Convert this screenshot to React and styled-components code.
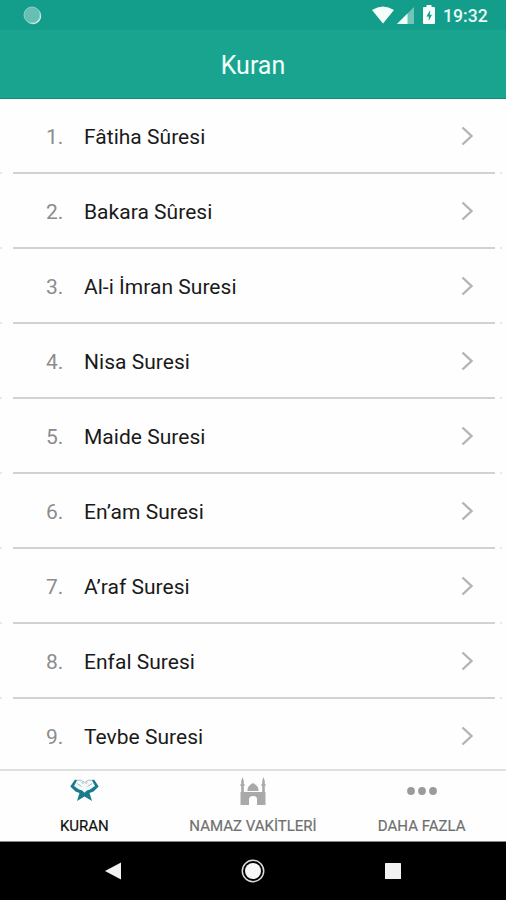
import styled, { createGlobalStyle } from 'styled-components';

const GlobalStyle = createGlobalStyle`
  * {
    box-sizing: border-box;
  }

  body {
    margin: 0;
    background: #ffffff;
    font-family: Roboto, 'Liberation Sans', sans-serif;
  }
`;

const Screen = styled.div`
  display: flex;
  flex-direction: column;
  width: 506px;
  height: 900px;
  overflow: hidden;
  background: #fefefe;
`;

const StatusBar = styled.div`
  display: flex;
  align-items: center;
  flex-shrink: 0;
  height: 30px;
  padding: 0 18px 0 23px;
  background: #139d8b;
`;

const StatusIcons = styled.div`
  display: flex;
  align-items: center;
  gap: 3px;
  margin-left: auto;
`;

const Clock = styled.span`
  width: 45px;
  margin-left: 4px;
  padding-top: 2px;
  font-size: 17.6px;
  font-weight: 500;
  line-height: 20px;
  white-space: nowrap;
  color: #e9f8f4;
`;

const Header = styled.header`
  display: flex;
  align-items: center;
  justify-content: center;
  flex-shrink: 0;
  height: 69px;
  padding-top: 4px;
  border-bottom: 1px solid #128a77;
  background: #18a48e;
`;

const Title = styled.h1`
  margin: 0;
  font-size: 25px;
  font-weight: 400;
  line-height: 30px;
  color: #f2fffb;
`;

const List = styled.ul`
  flex: 1;
  min-height: 0;
  margin: 0;
  padding: 0;
  overflow: hidden;
  list-style: none;
`;

const Row = styled.li`
  display: flex;
  flex-direction: column;
  height: 75px;
`;

const RowContent = styled.div`
  display: flex;
  align-items: center;
  flex: 1;
  padding: 1px 32px 0 46px;
`;

const Number = styled.span`
  width: 38px;
  padding-top: 1px;
  font-size: 21px;
  line-height: 26px;
  color: #8c8c8c;
`;

const Name = styled.span`
  flex: 1;
  padding-top: 1px;
  font-size: 21px;
  line-height: 26px;
  letter-spacing: 0.03px;
  color: #1a1a1a;
`;

const Divider = styled.div`
  display: flex;
  height: 2px;
  padding-right: 4px;
`;

const Line = styled.span`
  flex: 1;
  margin: 0 5px 0 11px;
  background: #d2d2d2;
`;

const Stub = styled.span`
  width: 2px;
  background: #e8e8e8;
`;

const TabBar = styled.nav`
  display: grid;
  grid-template-columns: repeat(3, 1fr);
  flex-shrink: 0;
  height: 73px;
  border-top: 2px solid #e0e0e0;
  border-bottom: 1px solid #858585;
`;

const Tab = styled.div`
  display: flex;
  flex-direction: column;
  align-items: center;
  padding-top: 5px;
  color: ${({ $active }) => ($active ? '#111111' : '#707070')};
`;

const TabLabel = styled.span`
  margin-top: 11px;
  font-size: 15px;
  line-height: 18px;
  white-space: nowrap;
  -webkit-text-stroke: 0.2px;
`;

const NavigationBar = styled.div`
  display: grid;
  grid-template-columns: repeat(3, 140px);
  justify-content: center;
  align-items: center;
  justify-items: center;
  flex-shrink: 0;
  height: 58px;
  background: #000000;
`;

const surahs = [
  'Fâtiha Sûresi',
  'Bakara Sûresi',
  'Al-i İmran Suresi',
  'Nisa Suresi',
  'Maide Suresi',
  'En’am Suresi',
  'A’raf Suresi',
  'Enfal Suresi',
  'Tevbe Suresi',
];

const Chevron = () => (
  <svg width="14" height="20" viewBox="0 0 14 20" fill="none">
    <path d="M2.5 1.5 11.5 10l-9 8.5" stroke="#b4b4b4" strokeWidth="2.4" />
  </svg>
);

const RecordingIcon = () => (
  <svg width="19" height="19" viewBox="0 0 19 19">
    <circle cx="10" cy="10" r="8.2" fill="#d5f3ec" />
    <circle cx="9" cy="9" r="8" fill="#67beb2" />
    <circle cx="9" cy="9" r="8" fill="none" stroke="#8bcfc5" strokeWidth="1" />
  </svg>
);

const WifiIcon = () => (
  <svg width="22" height="18" viewBox="0 0 22 18">
    <path d="M0 4Q11-3 22 4L11 17.5Z" fill="#f7fffd" />
  </svg>
);

const SignalIcon = () => (
  <svg width="18" height="17" viewBox="0 0 18 17">
    <path d="M17 0v17H0Z" fill="#71c4b8" />
    <path d="M10.5 6.5V17H0Z" fill="#f2fffb" />
  </svg>
);

const BatteryIcon = () => (
  <svg width="18" height="20" viewBox="-5 0 18 20">
    <path d="M3.5 0h5v2H11q1 0 1 1v15q0 1-1 1H1q-1 0-1-1V3q0-1 1-1h2.5Z" fill="#f7fffd" />
    <path d="M7.3 5 3.4 11.4h2.3V16L9 9.8H6.8Z" fill="#139d8b" />
  </svg>
);

// open book resting on a crossed stand
const QuranIcon = () => (
  <svg width="30" height="30" viewBox="0 0 30 30">
    <path
      d="M4.5 10 7 4.5Q12 3 15.5 6.5 19 3 24 4.500L26.500 10 21 15.500l-5.500 2.500-5.500-2.500Z"
      fill="#f6f9f9"
    />
    <path
      d="M7 4.300Q12 3 15.500 6.500 19 3 24 4.300M8 7.500l4.500 3M18.500 10.500l4.500-3M12.500 6l2 2M18.500 6l-2 2"
      fill="none"
      stroke="#9fc0c5"
      strokeWidth="1"
    />
    <path
      d="M6 3.500 1.300 10.500 6.500 15.500l4 1.500L8 25l7.500-4.500L23 25l-2.500-8 4-1.500 5.200-5L25 3.500l-2 1L26 10l-5 3.500q-3.500.5-5.500 3.200Q13.500 14 10 13.500L5 10l3-5.500Z"
      fill="#177b8c"
    />
  </svg>
);

const MosqueIcon = () => (
  <svg width="26" height="30" viewBox="0 0 26 30" fill="#a9a9a9">
    <path d="m2.500 1 1.300 4v3h.7v2h-.7v7H1.200v-7H.5V8h.7V5ZM23.500 1l1.300 4v3h.7v2h-.7v7h-2.600v-7h-.7V8h.7V5Z" />
    <path d="M7.500 15q-.5-5 5.500-8 6 3 5.500 8Z" />
    <path d="M.5 16h25v13H17v-5.500q0-3.500-4-3.500t-4 3.500V29H.5Z" />
  </svg>
);

const MoreIcon = () => (
  <svg width="30" height="30" viewBox="0 0 30 30" fill="#9b9b9b">
    <circle cx="4" cy="15" r="3.9" />
    <circle cx="15" cy="15" r="3.9" />
    <circle cx="26" cy="15" r="3.9" />
  </svg>
);

const BackIcon = () => (
  <svg width="18" height="20" viewBox="0 0 18 20">
    <path d="M1 10 17 1.5v17Z" fill="#f2f2f2" />
  </svg>
);

const HomeIcon = () => (
  <svg width="24" height="24" viewBox="0 0 24 24">
    <circle cx="12" cy="12" r="10.7" fill="none" stroke="#dddddd" strokeWidth="1.5" />
    <circle cx="12" cy="12" r="8" fill="#f7f7f7" />
  </svg>
);

const RecentsIcon = () => (
  <svg width="16" height="16" viewBox="0 0 16 16">
    <rect width="16" height="16" rx="0.5" fill="#f2f2f2" />
  </svg>
);

const App = () => {
  return (
    <>
      <GlobalStyle />
      <Screen>
        <StatusBar>
          <RecordingIcon />
          <StatusIcons>
            <WifiIcon />
            <SignalIcon />
            <BatteryIcon />
            <Clock>19:32</Clock>
          </StatusIcons>
        </StatusBar>

        <Header>
          <Title>Kuran</Title>
        </Header>

        <List>
          {surahs.map((name, index) => (
            <Row key={name}>
              <RowContent>
                <Number>{index + 1}.</Number>
                <Name>{name}</Name>
                <Chevron />
              </RowContent>
              <Divider>
                <Stub />
                <Line />
                <Stub />
              </Divider>
            </Row>
          ))}
        </List>

        <TabBar>
          <Tab $active>
            <QuranIcon />
            <TabLabel>KURAN</TabLabel>
          </Tab>
          <Tab>
            <MosqueIcon />
            <TabLabel>NAMAZ VAKİTLERİ</TabLabel>
          </Tab>
          <Tab>
            <MoreIcon />
            <TabLabel>DAHA FAZLA</TabLabel>
          </Tab>
        </TabBar>

        <NavigationBar>
          <BackIcon />
          <HomeIcon />
          <RecentsIcon />
        </NavigationBar>
      </Screen>
    </>
  );
};

export default App;
